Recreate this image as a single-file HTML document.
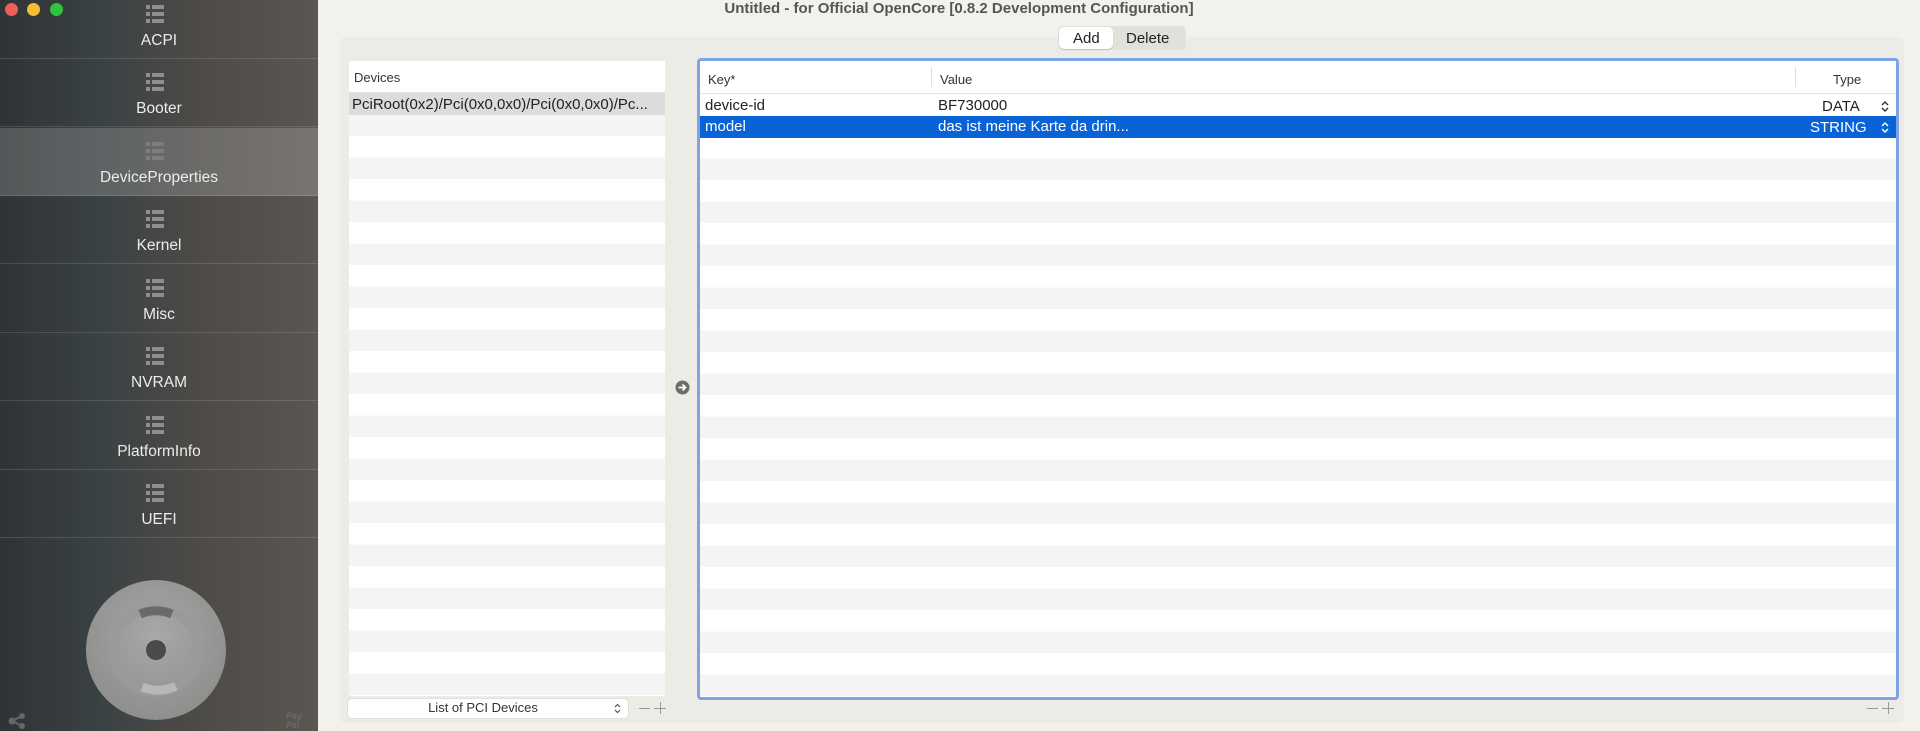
<!DOCTYPE html>
<html><head><meta charset="utf-8"><style>
*{margin:0;padding:0;box-sizing:border-box}
body{width:1920px;height:731px;overflow:hidden;background:#f3f1ec;font-family:"Liberation Sans",sans-serif;position:relative}
#side{position:absolute;left:0;top:0;width:318px;height:731px;background:linear-gradient(90deg,#2f3335 0%,#3a4143 30%,#4c4a47 60%,#5a5652 100%)}
.it{position:absolute;left:0;width:318px;height:68px;text-align:center;color:#ececec;font-size:15.5px;border-bottom:1px solid rgba(255,255,255,0.13)}
.it.sel{background:rgba(255,255,255,0.18)}
.it .ic{position:absolute;left:146px;top:14px;width:18px;height:18px}
.it span{position:absolute;left:0;right:0;top:41px}
.dot{position:absolute;top:3px;width:13px;height:13px;border-radius:50%}
.t{position:absolute;white-space:nowrap}
.row{position:absolute;left:0;right:0;height:21.5px}
</style></head><body>
<div id="side">
<div class="dot" style="left:5px;background:#ed5e58"></div>
<div class="dot" style="left:27px;background:#f5bd2f"></div>
<div class="dot" style="left:50px;background:#2ec440"></div>
</div>
<svg width="0" height="0" style="position:absolute"><defs><g id="li" fill="#8e8e8c"><rect x="0" y="0" width="4" height="4"/><rect x="6" y="0" width="12" height="4"/><rect x="0" y="7" width="4" height="4"/><rect x="6" y="7" width="12" height="4"/><rect x="0" y="14" width="4" height="4"/><rect x="6" y="14" width="12" height="4"/></g></defs></svg>
<div class="it" style="top:-9px"><svg class="ic" viewBox="0 0 18 18"><use href="#li"/></svg><span>ACPI</span></div>
<div class="it" style="top:59px"><svg class="ic" viewBox="0 0 18 18"><use href="#li"/></svg><span>Booter</span></div>
<div class="it sel" style="top:128px"><svg class="ic" viewBox="0 0 18 18" opacity=".6"><use href="#li"/></svg><span>DeviceProperties</span></div>
<div class="it" style="top:196px"><svg class="ic" viewBox="0 0 18 18"><use href="#li"/></svg><span>Kernel</span></div>
<div class="it" style="top:265px"><svg class="ic" viewBox="0 0 18 18"><use href="#li"/></svg><span>Misc</span></div>
<div class="it" style="top:333px"><svg class="ic" viewBox="0 0 18 18"><use href="#li"/></svg><span>NVRAM</span></div>
<div class="it" style="top:402px"><svg class="ic" viewBox="0 0 18 18"><use href="#li"/></svg><span>PlatformInfo</span></div>
<div class="it" style="top:470px"><svg class="ic" viewBox="0 0 18 18"><use href="#li"/></svg><span>UEFI</span></div>
<svg style="position:absolute;left:80px;top:575px" width="150" height="150" viewBox="0 0 150 150">
<defs><radialGradient id="g" cx="50%" cy="40%" r="60%"><stop offset="0" stop-color="#a8a8a6"/><stop offset="1" stop-color="#8e8e8c"/></radialGradient></defs>
<circle cx="76" cy="75" r="70" fill="url(#g)"/>
<circle cx="76" cy="75" r="42" fill="none" stroke="#9a9a98" stroke-width="9"/>
<path d="M60 39 A42 42 0 0 1 92 39" fill="none" stroke="#6a6a68" stroke-width="9"/>
<path d="M62 112 A42 42 0 0 0 96 111" fill="none" stroke="#b8b8b6" stroke-width="9"/>
<circle cx="76" cy="75" r="10" fill="#4a4a4a"/>
</svg>
<svg style="position:absolute;left:8px;top:713px" width="18" height="16" viewBox="0 0 18 16"><circle cx="4" cy="8" r="3.5" fill="#666"/><circle cx="14" cy="3" r="3" fill="#666"/><circle cx="14" cy="13" r="3" fill="#666"/><path d="M4 8L14 3M4 8L14 13" stroke="#666" stroke-width="2"/></svg>
<div class="t" style="left:286px;top:712px;font-size:9px;font-style:italic;font-weight:bold;color:#6b6866;line-height:9px">Pay<br>Pal</div>

<div class="t" style="left:318px;width:1602px;text-align:center;top:0;font-size:15px;font-weight:bold;color:#555"><span style="position:relative;left:-160px">Untitled - for Official OpenCore [0.8.2 Development Configuration]</span></div>
<div style="position:absolute;left:340px;top:37px;width:1564px;height:686px;background:#ecebe6;border-radius:6px"></div>
<div style="position:absolute;left:1058px;top:26px;width:128px;height:24px;background:#e2e0db;border-radius:6px"></div>
<div style="position:absolute;left:1059px;top:27px;width:54px;height:22px;background:#fff;border-radius:5px;box-shadow:0 1px 1px rgba(0,0,0,.15)"></div>
<div class="t" style="left:1073px;top:30px;font-size:15px;color:#222">Add</div>
<div class="t" style="left:1126px;top:30px;font-size:15px;color:#222">Delete</div>

<div id="dev" style="position:absolute;left:349px;top:61px;width:316px;height:635px;background:repeating-linear-gradient(180deg,#fff 0,#fff 21.5px,#f4f4f4 21.5px,#f4f4f4 43px);background-position:0 32px;overflow:hidden">
<div style="position:absolute;left:0;top:0;right:0;height:32px;background:#fff;border-bottom:1px solid #e4e4e4"></div>
<div class="t" style="left:5px;top:9px;font-size:13px;color:#333">Devices</div>
<div class="row" style="top:32px;background:#dcdcdc"></div>
<div class="t" style="left:3px;top:35px;font-size:15px;color:#222">PciRoot(0x2)/Pci(0x0,0x0)/Pci(0x0,0x0)/Pc...</div>
</div>
<div style="position:absolute;left:348px;top:699px;width:280px;height:19px;background:#fff;border-radius:4px;box-shadow:0 0 1px rgba(0,0,0,.3)"></div>
<div class="t" style="left:348px;width:270px;text-align:center;top:700px;font-size:13px;color:#333">List of PCI Devices</div>
<svg style="position:absolute;left:614px;top:703px" width="7" height="11" viewBox="0 0 7 11"><path d="M1 4L3.5 1.5L6 4M1 7L3.5 9.5L6 7" stroke="#555" stroke-width="1.2" fill="none"/></svg>
<div style="position:absolute;left:639px;top:708px;width:11px;height:1px;background:#999"></div>
<div style="position:absolute;left:654px;top:708px;width:12px;height:1px;background:#999"></div>
<div style="position:absolute;left:660px;top:702px;width:1px;height:12px;background:#999"></div>
<svg style="position:absolute;left:675px;top:380px" width="15" height="15" viewBox="0 0 15 15"><circle cx="7.5" cy="7.5" r="7" fill="#6d6d6d"/><path d="M3.5 7.5H10M7.5 4.5L10.5 7.5L7.5 10.5" stroke="#fff" stroke-width="1.8" fill="none"/></svg>

<div style="position:absolute;left:697px;top:58px;width:1202px;height:642px;border:3px solid #7fa4e6;border-radius:4px;background:repeating-linear-gradient(180deg,#fff 0,#fff 21.5px,#f4f4f4 21.5px,#f4f4f4 43px);background-position:0 76px;overflow:hidden">
<div style="position:absolute;left:0;top:0;right:0;height:33px;background:#fff;border-bottom:1px solid #e4e4e4"></div>
<div style="position:absolute;left:0;top:33px;right:0;height:22px;background:#fff"></div>
<div style="position:absolute;left:231px;top:6px;width:1px;height:20px;background:#e0e0e0"></div>
<div style="position:absolute;left:1095px;top:6px;width:1px;height:20px;background:#e0e0e0"></div>
<div class="t" style="left:8px;top:11px;font-size:13px;color:#333">Key*</div>
<div class="t" style="left:240px;top:11px;font-size:13px;color:#333">Value</div>
<div class="t" style="left:1133px;top:11px;font-size:13px;color:#333">Type</div>
<div class="t" style="left:5px;top:36px;font-size:15px;color:#222">device-id</div>
<div class="t" style="left:238px;top:36px;font-size:15px;color:#222">BF730000</div>
<div class="t" style="left:1122px;top:37px;font-size:15px;color:#222">DATA</div>
<svg style="position:absolute;left:1181px;top:39px" width="8" height="13" viewBox="0 0 8 13"><path d="M1 5L4 2L7 5M1 8L4 11L7 8" stroke="#333" stroke-width="1.4" fill="none"/></svg>
<div class="row" style="top:55px;height:22px;background:#0a63d6"></div>
<div class="t" style="left:5px;top:57px;font-size:15px;color:#fff">model</div>
<div class="t" style="left:238px;top:57px;font-size:15px;color:#fff">das ist meine Karte da drin...</div>
<div class="t" style="left:1110px;top:58px;font-size:15px;color:#fff">STRING</div>
<svg style="position:absolute;left:1181px;top:60px" width="8" height="13" viewBox="0 0 8 13"><path d="M1 5L4 2L7 5M1 8L4 11L7 8" stroke="#fff" stroke-width="1.4" fill="none"/></svg>
</div>
<div style="position:absolute;left:1867px;top:708px;width:11px;height:1px;background:#999"></div>
<div style="position:absolute;left:1882px;top:708px;width:12px;height:1px;background:#999"></div>
<div style="position:absolute;left:1888px;top:702px;width:1px;height:12px;background:#999"></div>
</body></html>
